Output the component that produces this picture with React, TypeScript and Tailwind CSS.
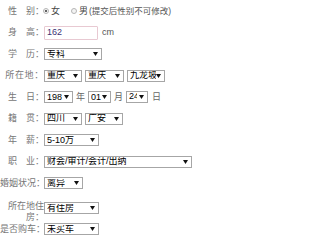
import type { ReactNode } from 'react'

const font = { fontFamily: '"Liberation Sans", "Noto Sans CJK SC", sans-serif' }

function Arrow() {
  return (
    <svg width="5" height="4" viewBox="0 0 5 4" className="shrink-0">
      <path d="M0 0H5L2.5 4Z" fill="#111" />
    </svg>
  )
}

function Select({ w, children }: { w: string; children: ReactNode }) {
  return (
    <div
      className={`flex h-[12px] shrink-0 items-center justify-between overflow-hidden border border-[#a6a6a6] bg-white pl-[2px] pr-[3px] text-[9px] leading-none text-black ${w}`}
    >
      <span className="overflow-hidden whitespace-nowrap">{children}</span>
      <Arrow />
    </div>
  )
}

function Radio({ checked }: { checked?: boolean }) {
  return (
    <span className="flex h-[6px] w-[6px] items-center justify-center rounded-full border border-[#b5b5b5] bg-[#f4f4f4]">
      {checked && <span className="h-[2px] w-[2px] rounded-full bg-[#333]" />}
    </span>
  )
}

function Row({ label, children, tracking }: { label: string; children: ReactNode; tracking?: boolean }) {
  return (
    <div className="flex h-[21.5px] items-center">
      <div
        className={`w-[44px] shrink-0 whitespace-pre text-right text-[9px] leading-none text-[#777] ${tracking ? 'tracking-[0.7px]' : ''}`}
      >
        {label}
      </div>
      <div className="flex items-center">{children}</div>
    </div>
  )
}

export default function App() {
  return (
    <div className="h-[240px] w-[200px] overflow-hidden bg-white pt-[0.5px]" style={font}>
      <Row label="性　别：">
        <span className="ml-[-1px] flex items-center gap-[1px] text-[9px] leading-none text-[#444]">
          <Radio checked />
          <span className="ml-[1px]">女</span>
          <span className="ml-[10px]">
            <Radio />
          </span>
          <span className="ml-[1px]">男</span>
          <span className="text-[8.5px] text-[#555]">(提交后性别不可修改)</span>
        </span>
      </Row>

      <Row label="身　高：">
        <div className="flex h-[14px] w-[54px] items-center rounded-[1px] border border-[#e8c9d2] bg-white pl-[2px] text-[9px] leading-none text-[#3c3273]">
          162
        </div>
        <span className="ml-[4px] text-[9px] leading-none text-[#555]">cm</span>
      </Row>

      <Row label="学　历：">
        <Select w="w-[58px]">专科</Select>
      </Row>

      <Row label="所在地：" tracking>
        <div className="flex gap-[3px]">
          <Select w="w-[38px]">重庆</Select>
          <Select w="w-[39px]">重庆</Select>
          <Select w="w-[38px]">九龙坡</Select>
        </div>
      </Row>

      <Row label="生　日：">
        <Select w="w-[29px]">198</Select>
        <span className="mx-[3px] text-[9px] leading-none text-[#666]">年</span>
        <Select w="w-[23px]">01</Select>
        <span className="mx-[3px] text-[9px] leading-none text-[#666]">月</span>
        <Select w="w-[22px]">
          <span className="inline-block w-[8px] overflow-hidden">24</span>
        </Select>
        <span className="ml-[4px] text-[9px] leading-none text-[#666]">日</span>
      </Row>

      <Row label="籍　贯：">
        <div className="flex gap-[3px]">
          <Select w="w-[38px]">四川</Select>
          <Select w="w-[38px]">广安</Select>
        </div>
      </Row>

      <Row label="年　薪：">
        <Select w="w-[55px]">5-10万</Select>
      </Row>

      <Row label="职　业：">
        <Select w="w-[148px]">财会/审计/会计/出纳</Select>
      </Row>

      <div className="flex h-[21.5px] items-center">
        <div className="w-[45px] shrink-0 whitespace-nowrap text-right text-[9px] leading-none text-[#777]">婚姻状况：</div>
        <div className="-ml-[1px]">
          <Select w="w-[39px]">离异</Select>
        </div>
      </div>

      <div className="mt-[7px] flex h-[22px] items-start">
        <div className="w-[44px] shrink-0 pl-[8px] text-right text-[9px] leading-[11px] text-[#777]">所在地住房：</div>
        <div className="mt-[1px]">
          <Select w="w-[55px]">有住房</Select>
        </div>
      </div>

      <div className="flex h-[12px] items-center">
        <div className="w-[45px] shrink-0 whitespace-nowrap text-right text-[9px] leading-none text-[#777]">是否购车：</div>
        <div className="-ml-[1px]">
          <Select w="w-[55px]">未买车</Select>
        </div>
      </div>
    </div>
  )
}
